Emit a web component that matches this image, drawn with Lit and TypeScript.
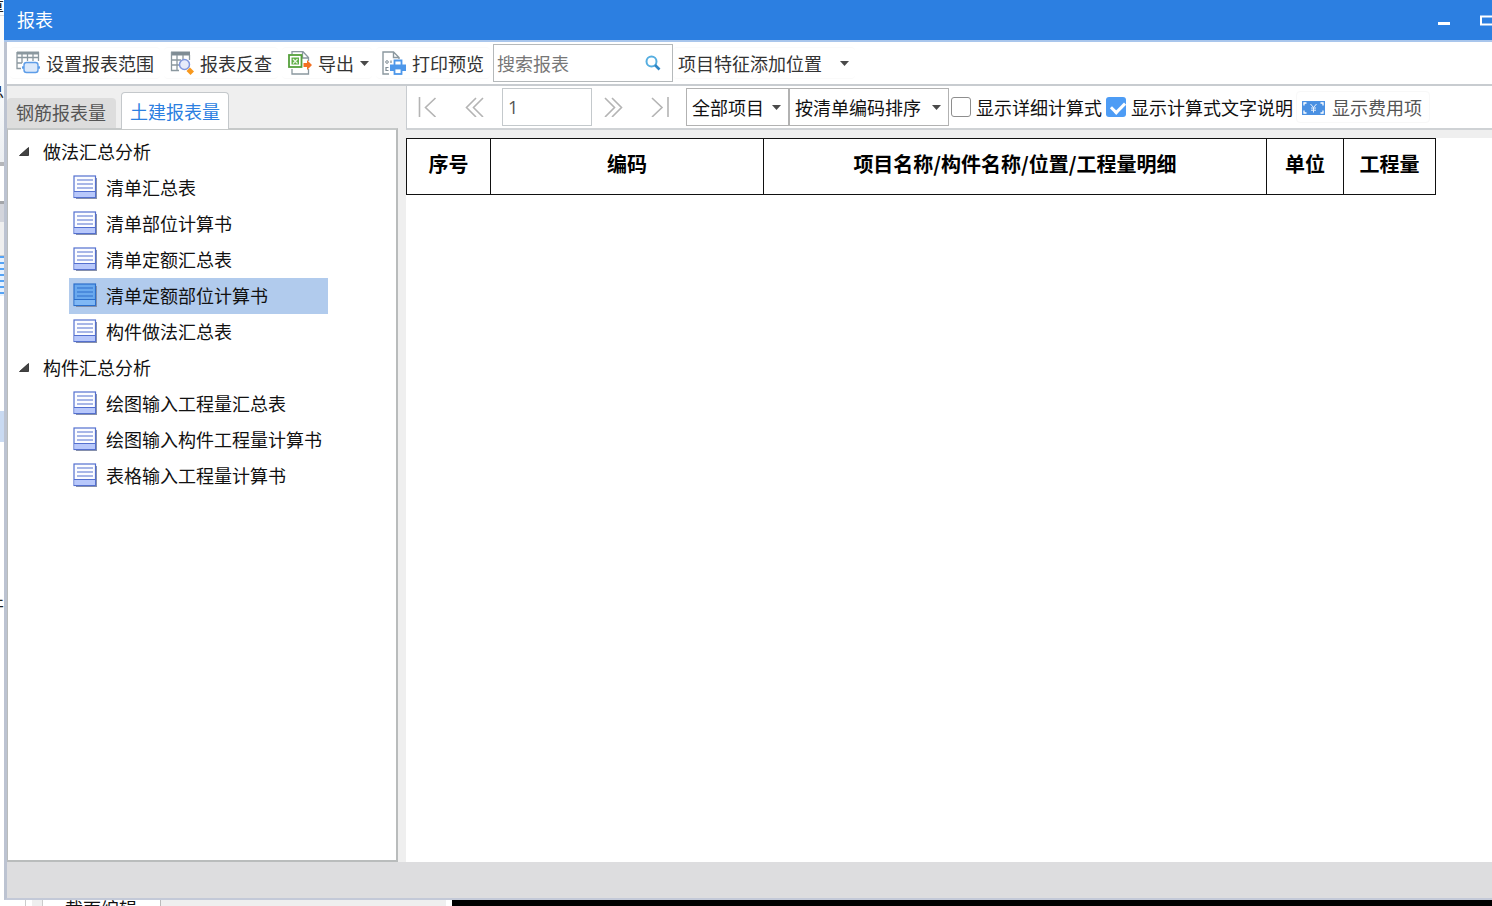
import { LitElement, html, css, svg } from "lit";
import { customElement, state } from "lit/decorators.js";
import { classMap } from "lit/directives/class-map.js";

interface ReportGroup {
  name: string;
  reports: string[];
}

const GROUPS: ReportGroup[] = [
  {
    name: "做法汇总分析",
    reports: ["清单汇总表", "清单部位计算书", "清单定额汇总表", "清单定额部位计算书", "构件做法汇总表"],
  },
  {
    name: "构件汇总分析",
    reports: ["绘图输入工程量汇总表", "绘图输入构件工程量计算书", "表格输入工程量计算书"],
  },
];

const caret = html`<svg class="caret" viewBox="0 0 9 5"><path d="M0 0H9L4.5 5Z" fill="#4a4a4a" /></svg>`;

const rangeIcon = html`<svg class="icon" viewBox="0 0 24 24">
  <path d="M1 2H23" stroke="#8b989f" stroke-width="3" />
  <path d="M1 1V17.500H5M6 1V12M11.500 1V10M17 1V10M22.500 1V10M1 6.500H23M1 12H6" fill="none" stroke="#8b989f" stroke-width="1.300" />
  <path d="M6 16.500H24" stroke="#5d9de8" stroke-width="2.400" />
  <rect x="8" y="11.500" width="14" height="10" rx="2.500" fill="#dbe9fb" stroke="#5d9de8" stroke-width="1.400" />
</svg>`;

const checkIcon = html`<svg class="icon" viewBox="0 0 24 24">
  <path d="M1 2.500H20" stroke="#7f8c94" stroke-width="4" />
  <path d="M1.500 1V19.500H9M7 4V19.500M13 4V9M19.500 4V9M1 9H11M1 14H9" fill="none" stroke="#8b989f" stroke-width="1.300" />
  <circle cx="14.500" cy="13.500" r="5" fill="#e6ebfa" stroke="#8097dd" stroke-width="1.500" />
  <path d="M16.500 20L20 16.500 24 20.500 20.500 24Z" fill="#f8981d" />
</svg>`;

const exportIcon = html`<svg class="icon" viewBox="0 0 24 24">
  <path d="M4 3V0.700H15L20.500 6.500V10M14.500 1V7H20.500M4 18V23H20.500V18" fill="none" stroke="#8b989f" stroke-width="1.300" />
  <rect x="1" y="4" width="12.500" height="12" fill="#fff" stroke="#55a03c" stroke-width="1.800" />
  <rect x="3.500" y="6.500" width="7.500" height="7" fill="#5fae45" />
  <path d="M5 8L9.500 12.500M9.500 8L5 12.500" stroke="#e9f6e4" stroke-width="1.200" />
  <path d="M15.500 12H19V9L24 14 19 19V16H15.500Z" fill="#f37021" />
</svg>`;

const previewIcon = html`<svg class="icon" viewBox="0 0 24 24">
  <path d="M7 23H1V1H11.500L17 6.500V8M11.500 1V6.500H17" fill="none" stroke="#8b989f" stroke-width="1.400" />
  <circle cx="5" cy="11" r="1.300" fill="none" stroke="#7f8c94" />
  <path d="M9 9.500V12M6.500 16.500H4V19.500H6.500" fill="none" stroke="#7f8c94" stroke-width="1.200" />
  <path d="M12.500 14V9.500H19.500V14" fill="#fff" stroke="#4d97ea" stroke-width="1.800" />
  <path d="M8 13.500H24V20H8Z" fill="#4d97ea" />
  <rect x="12.500" y="17.500" width="7" height="5.500" fill="#fff" stroke="#4d97ea" stroke-width="1.800" />
</svg>`;

const feeIcon = html`<svg class="fee-icon" viewBox="0 0 24 16">
  <rect width="23" height="14" y="2" fill="#4a90e2" />
  <path d="M2 6.500V4H4.500M18.500 4H21V6.500M21 11.500V14H18.500M4.500 14H2V11.500" fill="none" stroke="#fff" stroke-width="1.300" />
  <path d="M8.500 5L11.500 8.500 14.500 5M11.500 8.500V13.500M9 9H14M9 11.200H14" fill="none" stroke="#e8f1fd" stroke-width="1" />
</svg>`;

const reportIcon = (active: boolean) => {
  const line = active ? "#2c6fcb" : "#5470cf";
  return html`<svg class="icon" viewBox="0 0 24 24">
    <path d="M3 23.500H23.500V3" fill="none" stroke="#8b93a8" stroke-width="1.500" />
    <rect x="1" y="1" width="21.500" height="21.500" fill=${active ? "#6aa9ee" : "#fbfcff"} stroke=${line} stroke-width="1.200" />
    <rect x="1.500" y="16.500" width="20.500" height="5.500" fill=${active ? "#80b8f5" : "#b8c8fb"} />
    <path d="M1 16.500H22.500M4 5H20M4 9H20M4 13H20" stroke=${line} stroke-width="1.200" />
  </svg>`;
};

const pagerPaths: Record<string, string> = {
  first: "M1.500 0V20M17.500 1L7.500 10.500L17.500 20",
  prev: "M11 1L1.500 10.500L11 20M18 1L8.500 10.500L18 20",
  next: "M2 1L11.500 10.500L2 20M9 1L18.500 10.500L9 20",
  last: "M2 1L12 10.500L2 20M18 0V20",
};

@customElement("app-root")
export class AppRoot extends LitElement {
  @state() private selected = "清单定额部位计算书";

  static styles = css`
    :host {
      display: grid;
      grid-template-columns: 4px minmax(0, 1fr);
      grid-template-rows: minmax(0, 1fr) 6px;
      height: 100vh;
      overflow: hidden;
      background: #fff;
      color: #222;
      font: 18px/24px "Noto Sans CJK SC", sans-serif;
    }
    * {
      box-sizing: border-box;
    }
    button,
    input,
    select {
      font: inherit;
      color: inherit;
      border: 0;
      margin: 0;
      padding: 0;
      background: none;
      outline: none;
    }
    svg {
      display: block;
      flex: none;
    }
    .behind-left {
      display: flex;
      flex-direction: column;
      overflow: hidden;
      background: #fff;
    }
    .behind-left > div {
      display: flex;
      justify-content: flex-end;
      flex: none;
      overflow: hidden;
    }
    .b-top { height: 16px; align-items: flex-end; border-bottom: 1px solid #ddd; }
    .b-gap { height: 62px; background: #fbfcfd; }
    .b-ribbon { height: 84px; background: linear-gradient(#fbfcfd, #eceff2); }
    .b-field { height: 42px; border-top: 4px solid #b4b6ba; border-bottom: 3px solid #a4a6aa; }
    .b-head { height: 18px; background: #d3d5dc; }
    .b-panel { height: 34px; background: #efefef; border-bottom: 1px solid #ccc; }
    .b-grid { height: 40px; background: repeating-linear-gradient(#55a3f5 0 2px, #e8f2fe 2px 6px); }
    .b-space { height: 115px; }
    .b-select { height: 31px; background: #c9daf2; }
    .b-text { height: 176px; align-items: flex-end; }
    .window {
      display: flex;
      flex-direction: column;
      min-width: 0;
      border-left: 3px solid #bcc3d1;
      border-bottom: 2px solid #c3c9d8;
      background: #efefef;
    }
    .titlebar {
      display: flex;
      align-items: center;
      height: 42px;
      flex: none;
      margin-left: -3px;
      padding-left: 13px;
      background: #2c7fe1;
      color: #fff;
      border-bottom: 2px solid #a9c6ec;
      overflow: hidden;
    }
    .titlebar h1 {
      flex: 1;
      margin: 0;
      padding-bottom: 2px;
      font: inherit;
    }
    .titlebar button {
      display: flex;
      flex: none;
      width: 42px;
    }
    .titlebar button:last-child {
      width: 12px;
      overflow: hidden;
    }
    .toolbar {
      display: flex;
      align-items: center;
      height: 44px;
      flex: none;
      padding-left: 3px;
      background: #fff;
      border-bottom: 2px solid #c8ccd0;
      color: #333;
      white-space: nowrap;
    }
    .tool {
      display: flex;
      align-items: center;
      gap: 6px;
      height: 32px;
      margin-right: 4px;
      padding: 0 6px;
      border: 1px solid #fafafa;
      border-width: 1px 0;
      border-radius: 4px;
      white-space: nowrap;
    }
    .tool.menu {
      padding-right: 3px;
    }
    .tool.last {
      margin-right: 3px;
    }
    .tool.wide {
      gap: 18px;
      padding-left: 5px;
    }
    .icon {
      width: 24px;
      height: 24px;
    }
    .caret {
      width: 9px;
      height: 5px;
    }
    .search {
      display: flex;
      align-items: center;
      width: 180px;
      height: 38px;
      padding: 0 11px 0 3px;
      border: 1px solid #b5b9bb;
      flex: none;
    }
    .search input {
      flex: 1;
      min-width: 0;
    }
    .search input::placeholder {
      color: #777;
      opacity: 1;
    }
    .search button {
      flex: none;
    }
    .lens {
      width: 16px;
      height: 16px;
    }
    .body {
      display: grid;
      grid-template-columns: 391px minmax(0, 1fr);
      column-gap: 8px;
      flex: 1;
      min-height: 0;
    }
    .side,
    .report {
      display: flex;
      flex-direction: column;
      min-width: 0;
      min-height: 0;
    }
    .tabs {
      display: flex;
      align-items: flex-end;
      gap: 5px;
      height: 42px;
      flex: none;
    }
    .tab {
      height: 30px;
      padding: 0 10px 2px 9px;
      background: #dddddd;
      color: #555;
      border-radius: 4px 4px 0 0;
      white-space: nowrap;
    }
    .tab.on {
      position: relative;
      height: 37px;
      margin-bottom: -1px;
      padding: 0 8px;
      border: 1px solid #c4c8cb;
      border-bottom: 0;
      background: #fff;
      color: #2c7fe1;
    }
    .tree {
      flex: 1;
      min-height: 0;
      padding: 4px 0;
      border: 2px solid #b9bcbc;
      border-top-color: #c6c9c9;
      border-left-width: 1px;
      background: #fff;
      color: #111;
      overflow: hidden;
    }
    .group {
      display: flex;
      align-items: center;
      gap: 14px;
      height: 36px;
      padding: 0 0 2px 11px;
    }
    .group svg {
      width: 10px;
      height: 9px;
    }
    .items {
      width: max-content;
      min-width: 259px;
      margin: 0 0 0 61px;
      padding: 0;
      list-style: none;
    }
    .item {
      display: flex;
      align-items: center;
      gap: 9px;
      width: 100%;
      height: 36px;
      padding: 0 6px 2px 4px;
      white-space: nowrap;
    }
    .item.on {
      background: #b1cbed;
    }
    .pager {
      display: flex;
      align-items: center;
      height: 44px;
      flex: none;
      background: #fff;
      border-left: 1px solid #c8ccd0;
      border-bottom: 2px solid #cfd2d5;
      color: #111;
      white-space: nowrap;
    }
    .page {
      display: flex;
      align-items: center;
      justify-content: center;
      flex: none;
      width: 47px;
      height: 32px;
      padding-right: 5px;
    }
    .page svg {
      width: 20px;
      height: 20px;
    }
    .page-no {
      width: 90px;
      height: 38px;
      margin-left: 1px;
      padding: 0 5px;
      border: 1px solid #c4c9cc;
      color: #555;
      flex: none;
      font-family: "Open Sans", sans-serif;
    }
    .pick {
      display: grid;
      align-items: center;
      height: 38px;
      border: 1px solid #b2b2b2;
      flex: none;
    }
    .pick select,
    .pick .caret {
      grid-area: 1 / 1;
    }
    .pick select {
      appearance: none;
      width: 100%;
      height: 36px;
      padding-left: 5px;
    }
    .pick .caret {
      justify-self: end;
      margin-right: 7px;
      pointer-events: none;
    }
    .scope {
      width: 103px;
    }
    .sort {
      width: 160px;
    }
    .check {
      display: flex;
      align-items: center;
      gap: 5px;
      margin-left: 2px;
      height: 26px;
      flex: none;
    }
    .check + .check {
      margin-left: 4px;
    }
    .check input {
      appearance: none;
      display: grid;
      width: 20px;
      height: 20px;
      border: 1px solid #8e8e8e;
      border-radius: 3px;
      flex: none;
    }
    .check input:checked {
      border: 0;
      background: #4d9cf5;
    }
    .check input:checked::after {
      content: "";
      width: 11px;
      height: 6px;
      margin: 5px 0 0 5px;
      border: solid #fff;
      border-width: 0 0 3px 3px;
      transform: rotate(-45deg);
    }
    .fee {
      display: flex;
      align-items: center;
      gap: 6px;
      height: 32px;
      margin-left: 3px;
      padding: 0 7px 0 5px;
      border: 1px solid #f8f8f8;
      border-radius: 4px;
      color: #555;
    }
    .fee-icon {
      width: 24px;
      height: 16px;
    }
    .sheet {
      flex: 1;
      min-height: 0;
      margin-top: 8px;
      background: #fff;
      overflow: hidden;
    }
    table {
      width: calc(100% - 56px);
      border-collapse: collapse;
      table-layout: fixed;
      color: #000;
    }
    th {
      height: 56px;
      padding: 0 0 6px;
      border: 1px solid #111;
      font-size: 20px;
      line-height: 24px;
      font-weight: 700;
      white-space: nowrap;
    }
    .c-no { width: 84px; }
    .c-code { width: 273px; }
    .c-unit { width: 77px; }
    .c-qty { width: 92px; }
    .status {
      height: 36px;
      flex: none;
      background: #dddddf;
    }
    .behind-bottom {
      grid-column: 1 / -1;
      display: flex;
      overflow: hidden;
      background: #fff;
      color: #111;
      line-height: 16px;
    }
    .behind-bottom > div {
      flex: none;
      overflow: hidden;
    }
    .z-edge { width: 26px; border-right: 1px solid #ccc; }
    .z-pad { width: 11px; margin-left: 6px; background: #efefef; border-right: 1px solid #ccc; }
    .z-tab { width: 118px; padding-left: 22px; border-right: 1px solid #bbb; }
    .z-bar { width: 285px; background: #efefef; }
    .behind-bottom > .z-view { flex: 1; margin-left: 6px; background: #000; }
  `;

  private pageButton(kind: string, label: string) {
    return html`<button class="page" aria-label=${label}>
      <svg viewBox="0 0 20 20">
        ${svg`<path d=${pagerPaths[kind]} fill="none" stroke="#b4b4b4" stroke-width="1.6" />`}
      </svg>
    </button>`;
  }

  render() {
    return html`
      <div class="behind-left" aria-hidden="true">
        <div class="b-top">量</div>
        <div class="b-gap"></div>
        <div class="b-ribbon">总</div>
        <div class="b-field"></div>
        <div class="b-head"></div>
        <div class="b-panel"></div>
        <div class="b-grid"></div>
        <div class="b-space"></div>
        <div class="b-select"></div>
        <div class="b-text">开</div>
      </div>
      <main class="window">
        <header class="titlebar">
          <h1>报表</h1>
          <button aria-label="最小化">
            <svg width="12" height="12" viewBox="0 0 12 12"><path d="M0 9.500H12" stroke="#fff" stroke-width="3" /></svg>
          </button>
          <button aria-label="最大化">
            <svg width="16" height="12" viewBox="0 0 16 12">
              <path d="M1 2.500H15V10.500H1Z" fill="none" stroke="#fff" stroke-width="2" />
            </svg>
          </button>
        </header>
        <nav class="toolbar">
          <button class="tool">${rangeIcon}设置报表范围</button>
          <button class="tool">${checkIcon}报表反查</button>
          <button class="tool menu">${exportIcon}导出${caret}</button>
          <button class="tool last">${previewIcon}打印预览</button>
          <div class="search">
            <input type="search" placeholder="搜索报表" aria-label="搜索报表" />
            <button aria-label="搜索">
              <svg class="lens" viewBox="0 0 16 16">
                <circle cx="6.500" cy="6.500" r="5" fill="none" stroke="#56aee0" stroke-width="2" />
                <path d="M10 10L14.500 14.500" stroke="#2f86c6" stroke-width="2.600" />
              </svg>
            </button>
          </div>
          <button class="tool wide">项目特征添加位置${caret}</button>
        </nav>
        <div class="body">
          <section class="side">
            <div class="tabs" role="tablist">
              <button class="tab" role="tab" aria-selected="false">钢筋报表量</button>
              <button class="tab on" role="tab" aria-selected="true">土建报表量</button>
            </div>
            <div class="tree">
              ${GROUPS.map(
                (group) => html`
                  <div class="group">
                    <svg viewBox="0 0 10 9"><path d="M9.500 0.500V8.500H0.500Z" fill="#444" stroke="#222" stroke-width="0.800" /></svg>
                    ${group.name}
                  </div>
                  <ul class="items">
                    ${group.reports.map(
                      (name) => html`<li>
                        <button
                          class=${classMap({ item: true, on: name === this.selected })}
                          @click=${() => (this.selected = name)}
                        >
                          ${reportIcon(name === this.selected)}${name}
                        </button>
                      </li>`
                    )}
                  </ul>
                `
              )}
            </div>
          </section>
          <section class="report">
            <div class="pager">
              ${this.pageButton("first", "首页")} ${this.pageButton("prev", "上一页")}
              <input class="page-no" aria-label="页码" value="1" />
              ${this.pageButton("next", "下一页")} ${this.pageButton("last", "末页")}
              <div class="pick scope">
                <select aria-label="项目范围"><option>全部项目</option></select>
                ${caret}
              </div>
              <div class="pick sort">
                <select aria-label="排序方式"><option>按清单编码排序</option></select>
                ${caret}
              </div>
              <label class="check"><input type="checkbox" />显示详细计算式</label>
              <label class="check"><input type="checkbox" checked />显示计算式文字说明</label>
              <button class="fee">${feeIcon}显示费用项</button>
            </div>
            <div class="sheet">
              <table>
                <colgroup>
                  <col class="c-no" />
                  <col class="c-code" />
                  <col />
                  <col class="c-unit" />
                  <col class="c-qty" />
                </colgroup>
                <thead>
                  <tr>
                    <th>序号</th>
                    <th>编码</th>
                    <th>项目名称/构件名称/位置/工程量明细</th>
                    <th>单位</th>
                    <th>工程量</th>
                  </tr>
                </thead>
              </table>
            </div>
          </section>
        </div>
        <footer class="status"></footer>
      </main>
      <div class="behind-bottom" aria-hidden="true">
        <div class="z-edge"></div>
        <div class="z-pad"></div>
        <div class="z-tab">截面编辑</div>
        <div class="z-bar"></div>
        <div class="z-view"></div>
      </div>
    `;
  }
}
